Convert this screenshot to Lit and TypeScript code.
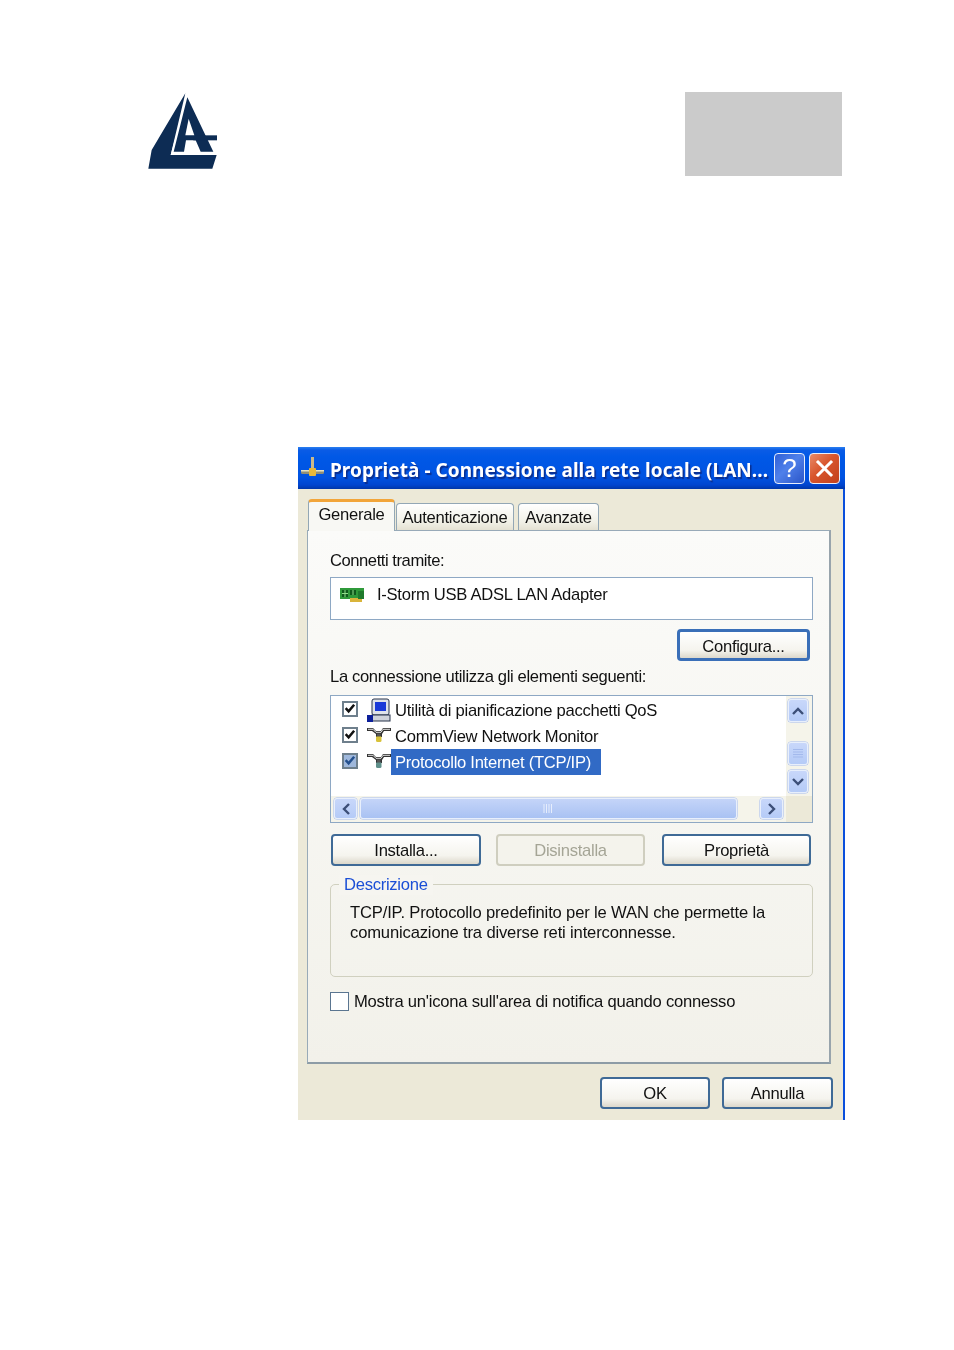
import { LitElement, html, css } from "lit";
import { customElement } from "lit/decorators.js";

const connector = (c: string) => html`<svg class="conn" viewBox="0 0 24 16" width="24" height="16">
  <path d="M0 1h6l3 3h5l2-3h8v3H17l-2 3v3H9V7L5 4H0z" fill="#333"/>
  <path d="M1 2.3h5l3 3h5l2-3h7" fill="none" stroke="#f4f4f4" stroke-width=".9"/>
  <rect x="9" y="9" width="5.5" height="6" rx="1.5" fill="${c}"/>
  <rect x="10" y="6.5" width="3.5" height="3" fill="#555"/>
</svg>`;

const check = (c: string) => html`<svg width="13" height="13" viewBox="0 0 13 13"><path d="M1.8 6.2 5 9.6 11 2.4" fill="none" stroke="${c}" stroke-width="2.7"/></svg>`;

@customElement("app-root")
export class AppRoot extends LitElement {
  static styles = css`
    :host { display: block; width: 954px; height: 1350px; background: #fff; overflow: hidden; font-family: "Liberation Sans", Arial, sans-serif; }
    .head { display: flex; justify-content: space-between; align-items: flex-start; padding: 92px 112px 0 148px; height: 355px; box-sizing: border-box; }
    .logo { display: block; margin-top: 1px; }
    .grey { width: 157px; height: 84px; background: #cbcbcb; }
    .row-win { padding-left: 298px; padding-top: 92px; }
    .win { width: 547px; height: 673px; box-sizing: border-box; background: #ece9d8; display: flex; flex-direction: column; border-right: 2px solid #0a4fdc; filter: blur(.5px); color: #111; font-size: 16.6px; letter-spacing: -.28px; }
    .title { height: 42px; margin-right: -2px; flex: none; box-sizing: border-box; display: flex; align-items: center; padding: 0 5px 0 3px; color: #fff;
      background: linear-gradient(#2b7ff0 0, #0a5ce6 3px, #0058e6 10px, #0053e2 30px, #0045cf 38px, #0036a8 42px); }
    .title svg { flex: none; }
    .title-text { flex: 1; min-width: 0; margin: 3px 0 0 6px; font: bold 19px "Noto Sans", sans-serif; letter-spacing: .05px; white-space: nowrap; text-shadow: 1.5px 1.5px 1px #0a2f90; }
    .tb { width: 31px; height: 31px; box-sizing: border-box; border: 1.5px solid #e8eefb; border-radius: 4px; margin-left: 4px; display: flex; align-items: center; justify-content: center; flex: none; }
    .help { background: linear-gradient(135deg, #2f5fd6, #4f80ea 45%, #2a55c8); color: #fff; font: 26px "Liberation Sans", sans-serif; letter-spacing: 0; }
    .close { background: linear-gradient(135deg, #e88a68, #d8552c 45%, #c2401c); }
    .body { flex: 1; padding: 10px 12px 0 9px; display: flex; flex-direction: column; }
    .tabs { display: flex; align-items: flex-end; height: 32px; margin-left: 1px; position: relative; z-index: 1; margin-bottom: -1px; }
    .tab { height: 27px; box-sizing: border-box; border: 1.5px solid #93a7b5; border-bottom: none; border-radius: 4px 4px 0 0; background: linear-gradient(#fff, #f1f0e6 70%, #e4e1d2); display: flex; align-items: center; justify-content: center; padding-top: 2px; }
    .tab.a { width: 87px; height: 32px; border: 1.5px solid #93a7b5; border-top: 3px solid #f2a53a; border-bottom: none; background: #f8f8f4; padding: 0 0 3px; margin-right: 1px; }
    .tab.b { width: 118px; margin-right: 4px; margin-bottom: 1px; }
    .tab.c { width: 81px; margin-bottom: 1px; }
    .panel { width: 524px; height: 534px; box-sizing: border-box; padding: 20px 16px 0 22px; background: linear-gradient(#fbfbf9, #f2f1ea); border: 1.5px solid #98aab8; border-bottom: 2px solid #8d9ca6; border-right: 2px solid #98a4ac; }
    .lab { line-height: 20px; height: 20px; }
    .lab.first { letter-spacing: -.45px; }
    .adapter { height: 43px; box-sizing: border-box; margin-top: 6px; background: #fff; border: 1.5px solid #8ea8c4; display: flex; align-items: center; padding: 0 0 7px 9px; }
    .adapter span { margin-left: 11px; }
    .cfg-row { display: flex; justify-content: flex-end; margin-top: 9px; padding-right: 3px; }
    .btn { height: 32px; box-sizing: border-box; border: 2px solid #3f6a96; border-radius: 4px; background: linear-gradient(#fff, #f5f4ee 70%, #dcd8cb); display: flex; align-items: center; justify-content: center; padding-top: 2px; }
    .btn.cfg { width: 133px; border: 3px solid #3a6fb8; padding-top: 4px; }
    .btn.dis { border-color: #cfcebf; color: #a5a596; background: #f4f3ec; }
    .lab2 { margin-top: 6px; letter-spacing: -.35px; }
    .list { margin-top: 8px; height: 128px; box-sizing: border-box; border: 1.5px solid #8ea8c4; background: #fff; display: grid; grid-template-columns: 1fr 26px; grid-template-rows: 1fr 26px; }
    .rows { padding: 1px 0 0 11px; }
    .li { height: 26px; display: flex; align-items: center; }
    .chk { width: 16px; height: 16px; box-sizing: border-box; border: 2px solid #6e7f8c; background: #fff; display: flex; align-items: center; justify-content: center; flex: none; margin-bottom: 3px; }
    .chk.sel { background: #9fb8dc; }
    .ico { width: 24px; margin-left: 9px; flex: none; display: flex; }
    .conn { display: block; margin-bottom: 2px; }
    .t { padding: 0 8px 0 4px; height: 26px; line-height: 27px; }
    .t.sel { background: #316ac5; color: #fff; padding-right: 10px; }
    .vs { background: #f5f4ea; padding: 3px 4px 2px 2px; display: flex; flex-direction: column; }
    .hs { background: #f5f4ea; padding: 2px 3px 2px 3px; display: flex; }
    .corner { background: #ece9d8; }
    .sb { background: linear-gradient(#c8d7fa, #b5cbf7); border: 1px solid #e8effc; border-radius: 3px; box-shadow: 0 0 0 .5px #a4baf0; display: flex; align-items: center; justify-content: center; box-sizing: border-box; flex: none; padding: 0; }
    .vs .sb { width: 20px; height: 23px; }
    .vs .thumb { margin-top: 20px; margin-bottom: 5px; }
    .hs .sb { width: 23px; height: 21px; }
    .hs .hthumb { width: 377px; margin-left: 3px; margin-right: 23px; background: linear-gradient(#c4d4f8, #a9c2f3); }
    .btns { display: flex; margin-top: 11px; padding-left: 1px; }
    .btns .btn { width: 149px; flex: none; }
    .btns .btn:first-child { width: 150px; }
    .btns .btn + .btn { margin-left: 15px; }
    .btns .btn + .btn + .btn { margin-left: 17px; }
    .group { position: relative; margin-top: 18px; height: 93px; box-sizing: border-box; border: 1.5px solid #d0d0bf; border-radius: 5px; padding: 18px 0 0 19px; line-height: 20px; letter-spacing: -.16px; }
    .legend { position: absolute; left: 8px; top: -10px; background: #f6f5f0; padding: 0 5px; color: #1b4fd6; line-height: 20px; letter-spacing: -.28px; }
    .cb-row { display: flex; align-items: center; margin-top: 15px; height: 20px; letter-spacing: -.22px; }
    .cb { width: 19px; height: 19px; box-sizing: border-box; border: 1.5px solid #5a7590; background: #fff; margin: 0 5px 2px 0; }
    .foot { display: flex; justify-content: flex-end; padding: 13px 0 0 0; margin-right: -2px; }
    .foot .ok { width: 110px; margin-right: 12px; }
    .foot .an { width: 111px; }
  `;

  render() {
    return html`
      <div class="head">
        <svg class="logo" viewBox="54 39 207 228" width="69" height="76" fill="#0d2c54">
          <path d="M166 40 122 225H260L247 266H55L65 210Z"/>
          <path fill="#fff" d="M172 40 262 225H122Z"/>
          <path d="M172 52 250 215H212L197 181H168L162 215H131Z"/>
          <path d="M190 166H261V181H190Z"/>
          <path fill="#fff" d="M176 116 166 166H193Z"/>
        </svg>
        <div class="grey"></div>
      </div>
      <div class="row-win">
        <div class="win">
          <div class="title">
            <svg width="23" height="24" viewBox="0 0 23 24">
              <rect x="10" y="1" width="3" height="13" fill="#c9b98a"/>
              <rect x="0" y="14" width="23" height="4" rx="1.5" fill="#8f8f78"/>
              <rect x="0" y="14" width="23" height="1.5" fill="#e8e2c0"/>
              <rect x="8" y="12" width="7" height="8" rx="1" fill="#e8b83a"/>
            </svg>
            <div class="title-text">Proprietà - Connessione alla rete locale (LAN...</div>
            <div class="tb help">?</div>
            <div class="tb close">
              <svg width="19" height="19" viewBox="0 0 19 19"><path d="M3 3 16 16M16 3 3 16" stroke="#fff" stroke-width="3" stroke-linecap="square"/></svg>
            </div>
          </div>
          <div class="body">
            <div class="tabs">
              <div class="tab a">Generale</div>
              <div class="tab b">Autenticazione</div>
              <div class="tab c">Avanzate</div>
            </div>
            <div class="panel">
              <div class="lab first">Connetti tramite:</div>
              <div class="adapter">
                <svg width="26" height="17" viewBox="0 0 26 17">
                  <rect x="0" y="1" width="24" height="11" fill="#2f9a3a"/>
                  <path d="M2 3h6v7H2zM10 3h6v5h-6z" fill="#0f5a1c"/>
                  <path d="M5 3v7M2 6.5h6M13 3v5" stroke="#8fdc8a" stroke-width="1"/>
                  <rect x="10" y="11" width="12" height="4" fill="#d9b43a"/>
                  <rect x="18" y="4" width="6" height="8" fill="#1f7a2c"/>
                </svg>
                <span>I-Storm USB ADSL LAN Adapter</span>
              </div>
              <div class="cfg-row"><div class="btn cfg">Configura...</div></div>
              <div class="lab lab2">La connessione utilizza gli elementi seguenti:</div>
              <div class="list">
                <div class="rows">
                  <div class="li">
                    <div class="chk">${check("#111")}</div>
                    <div class="ico"><svg width="24" height="25" viewBox="0 0 24 25">
                      <rect x="5" y="1" width="17" height="16" rx="2" fill="#dfe3ea" stroke="#26324a"/>
                      <rect x="8" y="4" width="11" height="9" fill="#1a3ad8"/>
                      <rect x="5" y="17" width="18" height="6" fill="#cfd3da" stroke="#26324a"/>
                      <rect x="0" y="17" width="6" height="7" fill="#0c1f9a"/>
                    </svg></div>
                    <div class="t">Utilità di pianificazione pacchetti QoS</div>
                  </div>
                  <div class="li">
                    <div class="chk">${check("#111")}</div>
                    <div class="ico">${connector("#d8c23a")}</div>
                    <div class="t">CommView Network Monitor</div>
                  </div>
                  <div class="li">
                    <div class="chk sel">${check("#24508e")}</div>
                    <div class="ico">${connector("#5f8f8a")}</div>
                    <div class="t sel">Protocollo Internet (TCP/IP)</div>
                  </div>
                </div>
                <div class="vs">
                  <div class="sb"><svg width="14" height="10" viewBox="0 0 14 10"><path d="M2 8 7 3 12 8" fill="none" stroke="#3c4f78" stroke-width="2.4"/></svg></div>
                  <div class="sb thumb"><svg width="10" height="11" viewBox="0 0 10 11"><path d="M0 1.5h10M0 4h10M0 6.5h10M0 9h10" stroke="#a3b9ec"/></svg></div>
                  <div class="sb"><svg width="14" height="10" viewBox="0 0 14 10"><path d="M2 2 7 7 12 2" fill="none" stroke="#3c4f78" stroke-width="2.4"/></svg></div>
                </div>
                <div class="hs">
                  <div class="sb"><svg width="10" height="14" viewBox="0 0 10 14"><path d="M8 2 3 7 8 12" fill="none" stroke="#3c4f78" stroke-width="2.4"/></svg></div>
                  <div class="sb hthumb"><svg width="11" height="9" viewBox="0 0 11 9"><path d="M1 0v9M3.5 0v9M6 0v9M8.5 0v9" stroke="#e6edfc"/></svg></div>
                  <div class="sb"><svg width="10" height="14" viewBox="0 0 10 14"><path d="M2 2 7 7 2 12" fill="none" stroke="#3c4f78" stroke-width="2.4"/></svg></div>
                </div>
                <div class="corner"></div>
              </div>
              <div class="btns">
                <div class="btn">Installa...</div>
                <div class="btn dis">Disinstalla</div>
                <div class="btn">Proprietà</div>
              </div>
              <div class="group">
                <div class="legend">Descrizione</div>
                TCP/IP. Protocollo predefinito per le WAN che permette la<br />comunicazione tra diverse reti interconnesse.
              </div>
              <div class="cb-row"><div class="cb"></div>Mostra un'icona sull'area di notifica quando connesso</div>
            </div>
            <div class="foot">
              <div class="btn ok">OK</div>
              <div class="btn an">Annulla</div>
            </div>
          </div>
        </div>
      </div>
    `;
  }
}
